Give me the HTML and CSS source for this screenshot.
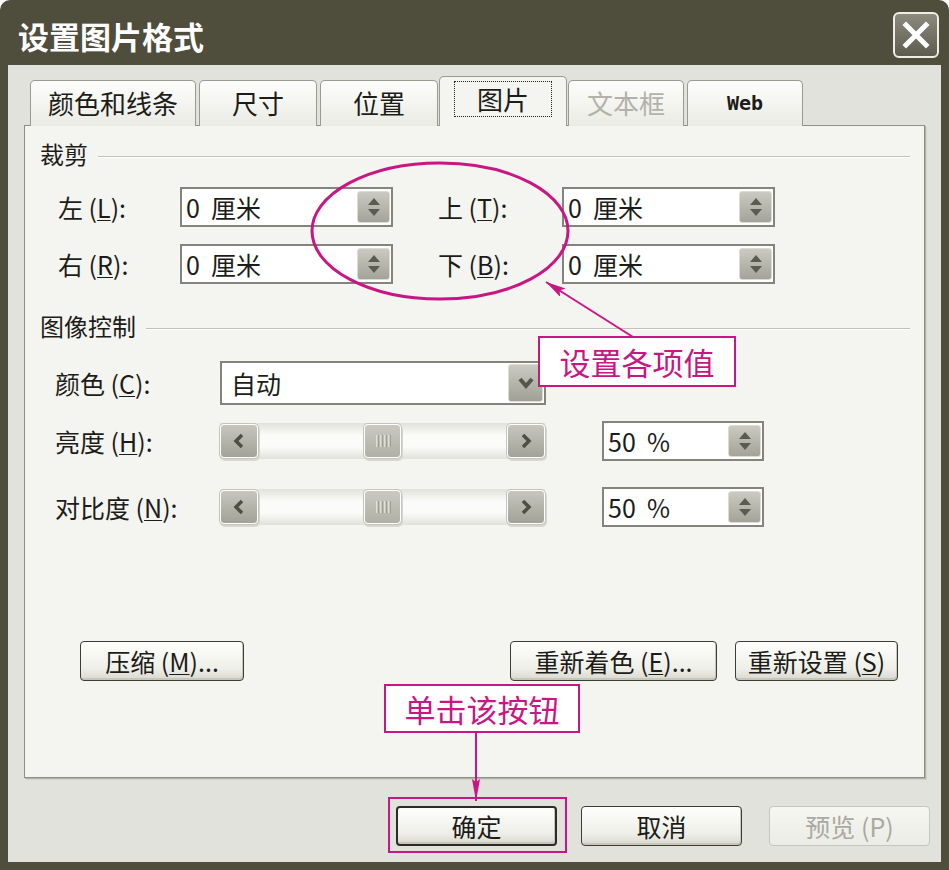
FILE: index.html
```html
<!DOCTYPE html>
<html lang="zh-CN">
<head>
<meta charset="utf-8">
<title>设置图片格式</title>
<link rel="stylesheet" href="styles.css">
</head>
<body>
<div class="window">
  <div class="titlebar">
    <span class="title">设置图片格式</span>
    <div class="close">
      <svg width="28" height="28" viewBox="0 0 28 28"><path d="M4 4 L24 24 M24 4 L4 24" stroke="#fff" stroke-width="5" stroke-linecap="square"/></svg>
    </div>
  </div>
  <div class="client">
    <div class="tabs">
      <div class="tab w1">颜色和线条</div>
      <div class="tab w2">尺寸</div>
      <div class="tab w2">位置</div>
      <div class="tab w3 active"><span class="focus">图片</span></div>
      <div class="tab w4 disabled">文本框</div>
      <div class="tab w4 web">Web</div>
    </div>
    <div class="panel">
      <div class="group-head"><span>裁剪</span><i class="rule"></i></div>
      <div class="crop-grid">
        <span class="lab">左 (<u>L</u>):</span>
        <div class="spin w213"><span class="val">0&nbsp; 厘米</span><span class="spin-btn"><svg width="14" height="22" viewBox="0 0 14 22"><path d="M7 2 L13 9 H1 Z M1 13 H13 L7 20 Z" fill="#5b5b50"/></svg></span></div>
        <span class="lab lab-r">上 (<u>T</u>):</span>
        <div class="spin w213"><span class="val">0&nbsp; 厘米</span><span class="spin-btn"><svg width="14" height="22" viewBox="0 0 14 22"><path d="M7 2 L13 9 H1 Z M1 13 H13 L7 20 Z" fill="#5b5b50"/></svg></span></div>
        <span class="lab">右 (<u>R</u>):</span>
        <div class="spin w213"><span class="val">0&nbsp; 厘米</span><span class="spin-btn"><svg width="14" height="22" viewBox="0 0 14 22"><path d="M7 2 L13 9 H1 Z M1 13 H13 L7 20 Z" fill="#5b5b50"/></svg></span></div>
        <span class="lab lab-r">下 (<u>B</u>):</span>
        <div class="spin w213"><span class="val">0&nbsp; 厘米</span><span class="spin-btn"><svg width="14" height="22" viewBox="0 0 14 22"><path d="M7 2 L13 9 H1 Z M1 13 H13 L7 20 Z" fill="#5b5b50"/></svg></span></div>
      </div>

      <div class="group-head g2"><span>图像控制</span><i class="rule"></i></div>
      <div class="row row-combo">
        <span class="lab2">颜色 (<u>C</u>):</span>
        <div class="combo"><span class="val">自动</span><span class="drop-btn"><svg width="18" height="14" viewBox="0 0 18 14"><path d="M3 3 L9 10 L15 3" stroke="#55554a" stroke-width="4" fill="none"/></svg></span></div>
      </div>
      <div class="row row-s1">
        <span class="lab2">亮度 (<u>H</u>):</span>
        <div class="slider">
          <span class="sbtn"><svg width="14" height="18" viewBox="0 0 14 18"><path d="M10 3 L4 9 L10 15" stroke="#4e4e44" stroke-width="3.5" fill="none"/></svg></span>
          <span class="thumb"><svg width="16" height="14" viewBox="0 0 16 14"><path d="M2 1 V13 M6 1 V13 M10 1 V13 M14 1 V13" stroke="#e6e6de" stroke-width="1.6"/><path d="M3.2 1 V13 M7.2 1 V13 M11.2 1 V13 M15.2 1 V13" stroke="#85857a" stroke-width="0.8"/></svg></span>
          <span class="sbtn"><svg width="14" height="18" viewBox="0 0 14 18"><path d="M4 3 L10 9 L4 15" stroke="#4e4e44" stroke-width="3.5" fill="none"/></svg></span>
        </div>
        <div class="spin w162"><span class="val">50&nbsp; %</span><span class="spin-btn"><svg width="14" height="22" viewBox="0 0 14 22"><path d="M7 2 L13 9 H1 Z M1 13 H13 L7 20 Z" fill="#5b5b50"/></svg></span></div>
      </div>
      <div class="row row-s2">
        <span class="lab2">对比度 (<u>N</u>):</span>
        <div class="slider">
          <span class="sbtn"><svg width="14" height="18" viewBox="0 0 14 18"><path d="M10 3 L4 9 L10 15" stroke="#4e4e44" stroke-width="3.5" fill="none"/></svg></span>
          <span class="thumb"><svg width="16" height="14" viewBox="0 0 16 14"><path d="M2 1 V13 M6 1 V13 M10 1 V13 M14 1 V13" stroke="#e6e6de" stroke-width="1.6"/><path d="M3.2 1 V13 M7.2 1 V13 M11.2 1 V13 M15.2 1 V13" stroke="#85857a" stroke-width="0.8"/></svg></span>
          <span class="sbtn"><svg width="14" height="18" viewBox="0 0 14 18"><path d="M4 3 L10 9 L4 15" stroke="#4e4e44" stroke-width="3.5" fill="none"/></svg></span>
        </div>
        <div class="spin w162"><span class="val">50&nbsp; %</span><span class="spin-btn"><svg width="14" height="22" viewBox="0 0 14 22"><path d="M7 2 L13 9 H1 Z M1 13 H13 L7 20 Z" fill="#5b5b50"/></svg></span></div>
      </div>

      <div class="panel-buttons">
        <button class="btn b-compress">压缩 (<u>M</u>)...</button>
        <button class="btn b-recolor">重新着色 (<u>E</u>)...</button>
        <button class="btn b-reset">重新设置 (<u>S</u>)</button>
      </div>
    </div>
    <div class="footer">
      <button class="btn fbtn default">确定</button>
      <button class="btn fbtn">取消</button>
      <button class="btn fbtn disabled">预览 (P)</button>
    </div>
  </div>

  <svg class="annot" width="949" height="870" viewBox="0 0 949 870">
    <defs>
      <marker id="ah" viewBox="0 0 20 10" refX="20" refY="5" markerWidth="20" markerHeight="10" markerUnits="userSpaceOnUse" orient="auto">
        <path d="M0 0 L20 5 L0 10 L4 5 Z" fill="#c81683"/>
      </marker>
      <marker id="ah2" viewBox="0 0 22 8" refX="22" refY="4" markerWidth="22" markerHeight="8" markerUnits="userSpaceOnUse" orient="auto">
        <path d="M0 0 L22 4 L0 8 L3 4 Z" fill="#c81683"/>
      </marker>
    </defs>
    <ellipse cx="440" cy="231" rx="128" ry="68" fill="none" stroke="#c81683" stroke-width="3"/>
    <line x1="633" y1="337" x2="546" y2="282" stroke="#c81683" stroke-width="2" marker-end="url(#ah)"/>
    <line x1="476" y1="733" x2="476" y2="801" stroke="#c81683" stroke-width="2" marker-end="url(#ah2)"/>
  </svg>
  <div class="callout c1">设置各项值</div>
  <div class="callout c2">单击该按钮</div>
  <div class="hl"></div>
</div>
</body>
</html>
```
FILE: styles.css
```css
* { box-sizing: border-box; }
html, body { margin: 0; padding: 0; background: #ffffff; }
body {
  font-family: "Noto Sans CJK SC", "Noto Sans", sans-serif;
  color: #1c1c18;
}
u { text-decoration: underline; text-underline-offset: 2px; text-decoration-thickness: 1px; }

.window {
  position: relative;
  width: 949px;
  height: 870px;
  background: #4f4d3c;
  border-radius: 10px 10px 0 0;
  display: flex;
  flex-direction: column;
  overflow: hidden;
}

/* title bar */
.titlebar {
  flex: none;
  height: 65px;
  padding: 5px 10px 0 18px;
  display: flex;
  align-items: center;
  justify-content: space-between;
}
.title {
  color: #ffffff;
  font-size: 31px;
  font-weight: 700;
  line-height: 1;
}
.close {
  width: 46px;
  height: 46px;
  border: 2px solid #eeede6;
  border-radius: 6px;
  background: linear-gradient(#8c8a7c, #5e5c4e);
  display: flex;
  align-items: center;
  justify-content: center;
}

/* client area */
.client {
  flex: 1;
  margin: 0 8px 8px 8px;
  background: #e2e2dc;
  padding: 11px 0 0 16px;
  display: flex;
  flex-direction: column;
}

/* tabs */
.tabs {
  display: flex;
  align-items: flex-end;
  gap: 3px;
  padding-left: 6px;
  height: 50px;
  position: relative;
  z-index: 1;
  margin-bottom: -1px;
}
.tab {
  height: 46px;
  border: 1px solid #9a9a92;
  border-bottom: none;
  border-radius: 5px 5px 0 0;
  background: linear-gradient(#fdfdfb, #ebebe5);
  font-size: 26px;
  line-height: 1;
  display: flex;
  align-items: center;
  justify-content: center;
  padding-bottom: 2px;
}
.tab.w1 { width: 166px; }
.tab.w2 { width: 118px; }
.tab.w3 { width: 128px; }
.tab.w4 { width: 116px; }
.tab.active {
  height: 50px;
  background: #f4f4f0;
  margin: 0 -2px;
  padding-bottom: 6px;
}
.tab .focus {
  border: 1px dotted #222;
  padding: 4px 22px;
}
.tab.disabled { color: #b2b2aa; }
.tab.web {
  font-family: "DejaVu Sans Mono", "Liberation Mono", monospace;
  font-size: 20px;
  font-weight: 700;
}

/* panel */
.panel {
  flex: none;
  width: 901px;
  height: 653px;
  border: 1px solid #8e8e86;
  background: #f4f4f0;
  box-shadow: 1px 1px 0 #b4b4ac, 2px 2px 0 #d2d2ca;
  display: flex;
  flex-direction: column;
}
.group-head {
  margin-top: 13px;
  height: 30px;
  padding: 0 14px 0 15px;
  display: flex;
  align-items: center;
  gap: 10px;
  font-size: 24px;
  line-height: 1;
}
.group-head.g2 { margin-top: 27px; }
.rule {
  flex: 1;
  height: 2px;
  border-top: 1px solid #c2c2ba;
  border-bottom: 1px solid #ffffff;
  margin-top: 6px;
}

.crop-grid {
  margin-top: 18px;
  padding-left: 33px;
  display: grid;
  grid-template-columns: 122px 213px 169px 213px;
  grid-auto-rows: 40px;
  row-gap: 17px;
  align-items: center;
}
.lab, .lab2 { font-size: 25px; line-height: 1; white-space: nowrap; }
.lab-r { padding-left: 45px; }

.spin {
  height: 40px;
  border: 2px solid #84847c;
  background: #ffffff;
  display: flex;
  align-items: center;
  padding-left: 4px;
  font-size: 25px;
  line-height: 1;
}
.spin.w213 { width: 213px; }
.spin.w162 { width: 162px; }
.spin .val { flex: 1; white-space: pre; }
.spin-btn {
  width: 33px;
  height: 32px;
  margin-right: 1px;
  border-radius: 3px;
  border: 1px solid #dcdcd4;
  background: linear-gradient(#cacac2, #a3a399);
  display: flex;
  align-items: center;
  justify-content: center;
}

.row {
  display: flex;
  align-items: center;
  padding-left: 30px;
}
.row .lab2 { width: 165px; }
.row-combo { margin-top: 20px; height: 44px; }
.row-s1 { margin-top: 16px; height: 40px; }
.row-s2 { margin-top: 26px; height: 40px; }

.combo {
  width: 326px;
  height: 44px;
  border: 2px solid #84847c;
  background: #ffffff;
  display: flex;
  align-items: center;
  padding-left: 9px;
  font-size: 25px;
  line-height: 1;
}
.combo .val { flex: 1; }
.drop-btn {
  width: 35px;
  height: 38px;
  margin-right: 1px;
  border-radius: 3px;
  border: 1px solid #dcdcd4;
  background: linear-gradient(#cacac2, #a0a096);
  display: flex;
  align-items: center;
  justify-content: center;
}

.slider {
  width: 325px;
  height: 36px;
  margin-right: 57px;
  display: flex;
  align-items: center;
  justify-content: space-between;
  background: linear-gradient(#e2e2dc, #fbfbf9 35%, #fbfbf9 65%, #e2e2dc);
}
.sbtn, .thumb {
  width: 38px;
  height: 34px;
  border-radius: 4px;
  border: 1px solid #ffffff;
  box-shadow: 0 0 0 1px #c4c4bc, 1px 2px 0 1px #d8d8d0;
  background: linear-gradient(#c6c6be, #a2a298);
  display: flex;
  align-items: center;
  justify-content: center;
}
.thumb { width: 37px; background: linear-gradient(#c9c9c1, #b0b0a6); }

.panel-buttons {
  margin-top: 114px;
  display: flex;
  align-items: center;
  padding: 0 26px 0 55px;
}
.btn {
  font-family: "Noto Sans CJK SC", "Noto Sans", sans-serif;
  height: 40px;
  border: 1px solid #3d3d33;
  border-radius: 4px;
  background: linear-gradient(#fefefc, #efefe9 70%, #d8d8d0);
  box-shadow: inset -1px -2px 0 #c6c6bc;
  font-size: 25px;
  line-height: 1;
  color: #1c1c18;
  padding: 0;
  display: flex;
  align-items: center;
  justify-content: center;
}
.b-compress { width: 164px; }
.b-recolor { width: 207px; margin-left: auto; }
.b-reset { width: 163px; margin-left: 18px; }

.footer {
  margin-top: 28px;
  display: flex;
  justify-content: flex-end;
  gap: 24px;
  padding-right: 11px;
}
.fbtn { width: 161px; }
.fbtn.default { border: 2px solid #2c2c24; }
.fbtn.disabled {
  border-color: #c6c6be;
  color: #a9a9a1;
  box-shadow: none;
  background: linear-gradient(#f6f6f2, #ececE6);
  margin-left: 3px;
}

/* annotations overlay */
.annot {
  position: absolute;
  left: 0;
  top: 0;
  pointer-events: none;
}
.callout {
  position: absolute;
  border: 2px solid #c81683;
  background: #ffffff;
  color: #c81683;
  font-size: 31px;
  line-height: 1;
  display: flex;
  align-items: center;
  justify-content: center;
}
.c1 { left: 538px; top: 336px; width: 198px; height: 51px; }
.c2 { left: 384px; top: 684px; width: 196px; height: 49px; }
.hl {
  position: absolute;
  left: 388px;
  top: 797px;
  width: 179px;
  height: 56px;
  border: 2px solid #c81683;
}
```
